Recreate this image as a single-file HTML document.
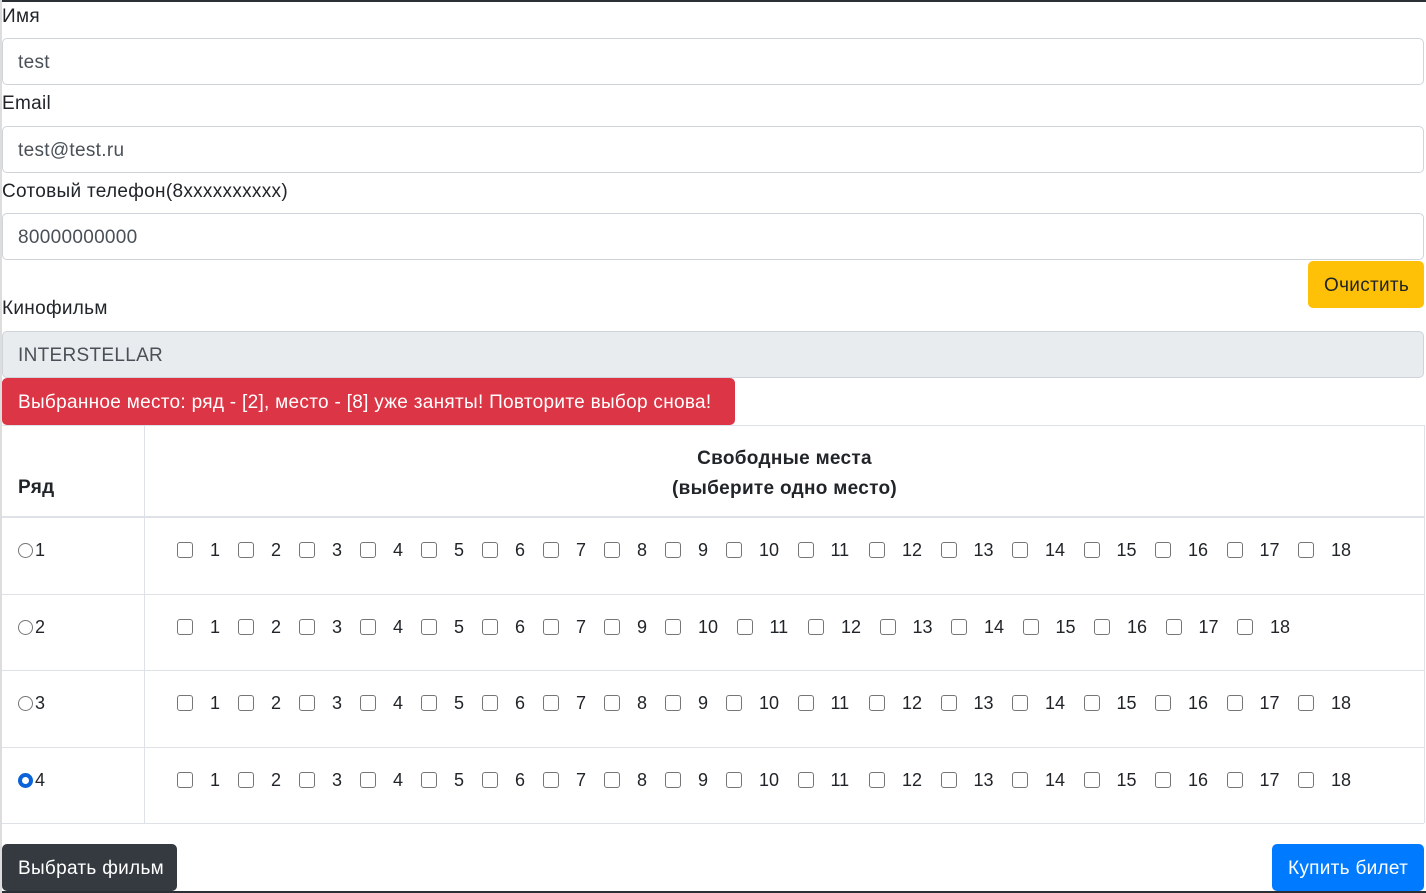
<!DOCTYPE html>
<html><head><meta charset="utf-8"><style>
*{box-sizing:border-box}
html{overflow:hidden;height:893px}
body{margin:0;width:1426px;height:893px;position:relative;overflow:hidden;background:#fff;font-family:"Liberation Sans","DejaVu Sans",sans-serif;font-size:19px;letter-spacing:0.3px;color:#212529}
.a{position:absolute;white-space:nowrap}
.lbl{left:2px;line-height:24px}
.in{left:2px;width:1422px;height:47px;border:1px solid #ced4da;border-radius:5px;padding:0 15px;line-height:48px;color:#495057}
.btn{border-radius:5px;height:47px;line-height:50px;padding:0 16px;color:#fff}
.hl{background:#dee2e6;height:1px}
.vl{background:#dee2e6;width:1px}
.row{left:177px;height:24px;line-height:24px;font-size:18px;letter-spacing:0}
.s{display:inline-block;width:61px;position:relative;height:24px}
.d{width:71.5px}
.s i{position:absolute;left:0;top:4px;width:16px;height:16px;border:1.5px solid #767676;border-radius:3px}
.s b{position:absolute;left:33px;font-weight:normal}
.r{left:18px;line-height:24px;font-size:18px}
.r i{display:inline-block;width:15px;height:15px;border:1.5px solid #767676;border-radius:50%;vertical-align:-2px;margin-right:2px}
.r i.on{border:4px solid #0b63d9}
</style></head><body>
<div class="a" style="left:0;top:0;width:1426px;height:2px;background:#2b2f36"></div>
<div class="a" style="left:0;top:891px;width:1426px;height:2px;background:#2b2f36"></div>
<div class="a" style="left:0;top:0;width:2px;height:893px;background:#ddd"></div>
<div class="a lbl" style="top:5px">Имя</div>
<div class="a in" style="top:38px">test</div>
<div class="a lbl" style="top:92px">Email</div>
<div class="a in" style="top:126px">test@test.ru</div>
<div class="a lbl" style="top:180px">Сотовый телефон(8xxxxxxxxxx)</div>
<div class="a in" style="top:213px">80000000000</div>
<div class="a btn" style="left:1308px;top:261px;width:116px;background:#ffc107;color:#212529">Очистить</div>
<div class="a lbl" style="top:297px">Кинофильм</div>
<div class="a in" style="top:331px;background:#e9ecef">INTERSTELLAR</div>
<div class="a btn" style="left:2px;top:378px;width:733px;background:#dc3545">Выбранное место: ряд - [2], место - [8] уже заняты! Повторите выбор снова!</div>

<div class="a hl" style="left:2px;width:1422px;top:425px"></div>
<div class="a hl" style="left:2px;width:1422px;top:516px;height:2px"></div>
<div class="a hl" style="left:2px;width:1422px;top:594px"></div>
<div class="a hl" style="left:2px;width:1422px;top:670px"></div>
<div class="a hl" style="left:2px;width:1422px;top:747px"></div>
<div class="a hl" style="left:2px;width:1422px;top:823px"></div>
<div class="a vl" style="left:144px;top:425px;height:398px"></div>
<div class="a vl" style="left:1424px;top:425px;height:398px"></div>
<div class="a" style="left:18px;top:477px;font-weight:bold">Ряд</div>
<div class="a" style="left:145px;width:1279px;top:444px;text-align:center;font-weight:bold;line-height:30px">Свободные места<br>(выберите одно место)</div>

<div class="a r" style="top:538px"><i></i>1</div>
<div class="a r" style="top:615px"><i></i>2</div>
<div class="a r" style="top:691px"><i></i>3</div>
<div class="a r" style="top:768px"><i class="on"></i>4</div>

<div class="a row" style="top:538px"><span class="s"><i></i><b>1</b></span><span class="s"><i></i><b>2</b></span><span class="s"><i></i><b>3</b></span><span class="s"><i></i><b>4</b></span><span class="s"><i></i><b>5</b></span><span class="s"><i></i><b>6</b></span><span class="s"><i></i><b>7</b></span><span class="s"><i></i><b>8</b></span><span class="s"><i></i><b>9</b></span><span class="s d"><i></i><b>10</b></span><span class="s d"><i></i><b>11</b></span><span class="s d"><i></i><b>12</b></span><span class="s d"><i></i><b>13</b></span><span class="s d"><i></i><b>14</b></span><span class="s d"><i></i><b>15</b></span><span class="s d"><i></i><b>16</b></span><span class="s d"><i></i><b>17</b></span><span class="s d"><i></i><b>18</b></span></div>
<div class="a row" style="top:615px"><span class="s"><i></i><b>1</b></span><span class="s"><i></i><b>2</b></span><span class="s"><i></i><b>3</b></span><span class="s"><i></i><b>4</b></span><span class="s"><i></i><b>5</b></span><span class="s"><i></i><b>6</b></span><span class="s"><i></i><b>7</b></span><span class="s"><i></i><b>9</b></span><span class="s d"><i></i><b>10</b></span><span class="s d"><i></i><b>11</b></span><span class="s d"><i></i><b>12</b></span><span class="s d"><i></i><b>13</b></span><span class="s d"><i></i><b>14</b></span><span class="s d"><i></i><b>15</b></span><span class="s d"><i></i><b>16</b></span><span class="s d"><i></i><b>17</b></span><span class="s d"><i></i><b>18</b></span></div>
<div class="a row" style="top:691px"><span class="s"><i></i><b>1</b></span><span class="s"><i></i><b>2</b></span><span class="s"><i></i><b>3</b></span><span class="s"><i></i><b>4</b></span><span class="s"><i></i><b>5</b></span><span class="s"><i></i><b>6</b></span><span class="s"><i></i><b>7</b></span><span class="s"><i></i><b>8</b></span><span class="s"><i></i><b>9</b></span><span class="s d"><i></i><b>10</b></span><span class="s d"><i></i><b>11</b></span><span class="s d"><i></i><b>12</b></span><span class="s d"><i></i><b>13</b></span><span class="s d"><i></i><b>14</b></span><span class="s d"><i></i><b>15</b></span><span class="s d"><i></i><b>16</b></span><span class="s d"><i></i><b>17</b></span><span class="s d"><i></i><b>18</b></span></div>
<div class="a row" style="top:768px"><span class="s"><i></i><b>1</b></span><span class="s"><i></i><b>2</b></span><span class="s"><i></i><b>3</b></span><span class="s"><i></i><b>4</b></span><span class="s"><i></i><b>5</b></span><span class="s"><i></i><b>6</b></span><span class="s"><i></i><b>7</b></span><span class="s"><i></i><b>8</b></span><span class="s"><i></i><b>9</b></span><span class="s d"><i></i><b>10</b></span><span class="s d"><i></i><b>11</b></span><span class="s d"><i></i><b>12</b></span><span class="s d"><i></i><b>13</b></span><span class="s d"><i></i><b>14</b></span><span class="s d"><i></i><b>15</b></span><span class="s d"><i></i><b>16</b></span><span class="s d"><i></i><b>17</b></span><span class="s d"><i></i><b>18</b></span></div>

<div class="a btn" style="left:2px;top:844px;width:175px;background:#343a40">Выбрать фильм</div>
<div class="a btn" style="left:1272px;top:844px;width:152px;background:#007bff">Купить билет</div>
</body></html>
